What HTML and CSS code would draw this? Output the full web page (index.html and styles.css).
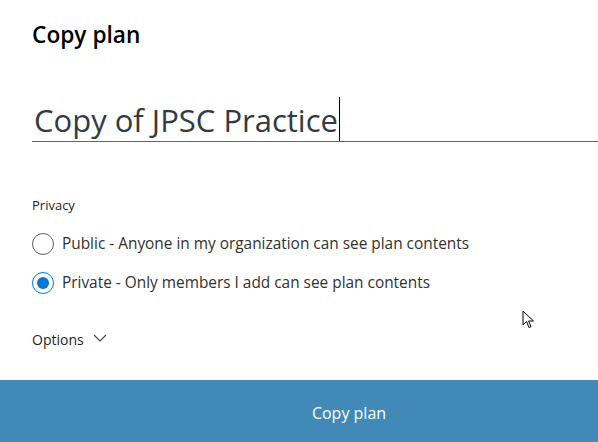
FILE: index.html
```html
<!DOCTYPE html>
<html lang="en">
<head>
  <meta charset="UTF-8">
  <meta name="viewport" content="width=device-width, initial-scale=1.0">
  <title>Copy plan</title>
  <link rel="stylesheet" href="styles.css">
</head>
<body>

  <div class="dialog">
    <div class="content">
      <h2 class="title">Copy plan</h2>

      <div class="name-field">
        <span class="name-text">Copy of JPSC Practice</span><span class="caret"></span>
      </div>

      <div class="privacy">
        <div class="section-label">Privacy</div>
        <label class="radio-row">
          <span class="radio"></span>
          <span>Public - Anyone in my organization can see plan contents</span>
        </label>
        <label class="radio-row">
          <span class="radio checked"></span>
          <span>Private - Only members I add can see plan contents</span>
        </label>
      </div>

      <div class="options">
        <span>Options</span>
        <svg class="chevron" width="14" height="8" viewBox="0 0 14 8">
          <path d="M1 1 L7 7 L13 1" fill="none" stroke="#444" stroke-width="1.1"/>
        </svg>
      </div>
    </div>

    <button class="copy-btn">Copy plan</button>
  </div>

  <!-- mouse pointer from the screenshot -->
  <svg class="pointer" width="14" height="21" viewBox="0 0 14 21">
    <path d="M1 1 L1 15 L4.5 11.5 L7 17.5 L9 16.7 L6.6 11 L11.5 11 Z" fill="#fff" stroke="#000" stroke-width="1"/>
  </svg>

</body>
</html>
```

FILE: styles.css
```css
body {
  margin: 0;
  font-family: "Open Sans", "Noto Sans", sans-serif;
  color: #252423;
  background: #fff;
}
.dialog {
  width: 598px;
  height: 442px;
  display: flex;
  flex-direction: column;
  overflow: hidden;
}
.content {
  flex: 1;
  padding-left: 32px;
}
.title {
  margin: 20px 0 0 0;
  font-size: 22.7px;
  font-weight: 600;
  line-height: 30px;
  color: #000;
}
.name-field {
  margin-top: 44px;
  height: 47px;
  border-bottom: 1px solid #3f6f8f;
  display: flex;
  align-items: flex-end;
  padding-left: 2px;
}
.name-text {
  font-size: 31px;
  line-height: 42px;
  color: #323a45;
}
.caret {
  width: 1px;
  height: 44px;
  background: #000;
  margin-left: 1px;
}
.privacy {
  margin-top: 54px;
}
.section-label {
  font-size: 13px;
  line-height: 18px;
}
.radio-row {
  display: flex;
  align-items: center;
  gap: 8px;
  font-size: 15.4px;
  line-height: 22px;
  color: #323130;
  margin-top: 19px;
}
.radio-row + .radio-row {
  margin-top: 17px;
}
.radio {
  border: 1px solid #605e5c;
  border-radius: 50%;
  box-sizing: border-box;
  width: 22px;
  height: 22px;
  display: flex;
  align-items: center;
  justify-content: center;
}
.radio.checked {
  border: 1.5px solid #0078d4;
}
.radio.checked::after {
  content: "";
  width: 12px;
  height: 12px;
  border-radius: 50%;
  background: #0078d4;
}
.options {
  margin-top: 36px;
  display: flex;
  align-items: center;
  gap: 9px;
  font-size: 14px;
  color: #252423;
}
.chevron {
  margin-top: -3px;
}
.copy-btn {
  height: 62px;
  border: none;
  background-color: #418ab8;
  color: #fff;
  font-family: inherit;
  font-size: 16px;
  padding: 4px 0 0 100px;
}
.pointer {
  position: absolute;
  left: 522px;
  top: 310px;
}
```
